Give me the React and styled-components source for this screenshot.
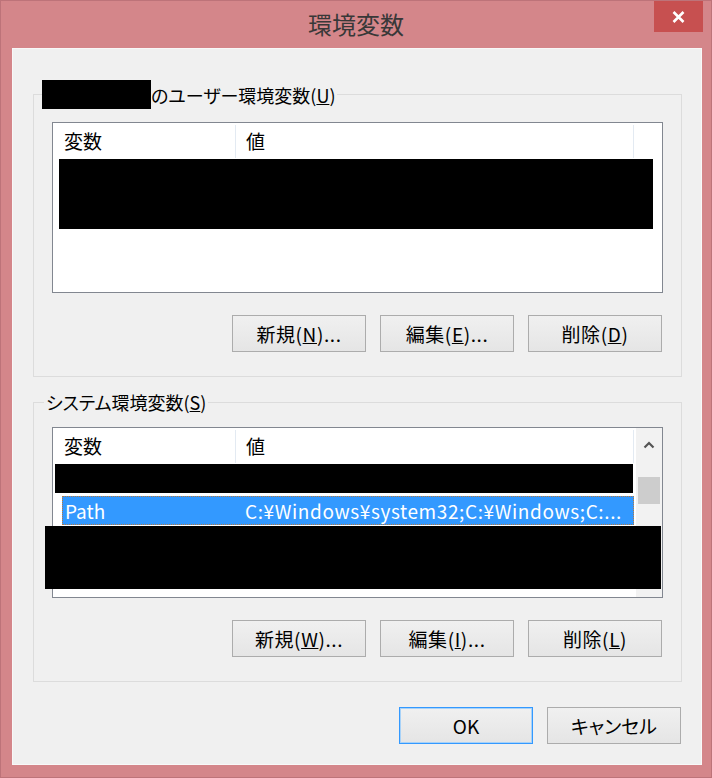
import React from 'react';
import styled, {createGlobalStyle} from 'styled-components';

const GlobalStyle = createGlobalStyle`
    html, body {
        margin: 0;
        padding: 0;
    }
    body {
        background: #d4868a;
        font-family: "Noto Sans CJK JP", "Noto Sans", sans-serif;
        font-feature-settings: "palt";
    }
`;

const Window = styled.div`
    width: 712px;
    height: 778px;
    box-sizing: border-box;
    background: #d4868a;
    border: 1px solid #bd7379;
    display: flex;
    flex-direction: column;
`;

const TitleBar = styled.div`
    height: 47px;
    display: grid;
    grid-template-columns: 1fr auto 1fr;
    align-items: start;
`;

const Title = styled.div`
    grid-column: 2;
    font-size: 24px;
    line-height: 46px;
    color: #383838;
`;

const CloseButton = styled.div`
    grid-column: 3;
    justify-self: end;
    width: 49px;
    height: 31px;
    margin-right: 8px;
    background: #c75050;
    display: flex;
    align-items: center;
    justify-content: center;
`;

const Client = styled.div`
    flex: 1;
    margin: 0 9px 12px 11px;
    background: #f0f0f0;
    border: 1px solid #f8f8f8;
    padding: 31px 19px 0 20px;
    display: flex;
    flex-direction: column;
`;

const Group = styled.fieldset`
    margin: 0;
    margin-top: ${p => p.$gap || 0}px;
    border: 1px solid #dcdcdc;
    padding: 13px 18px 24px 18px;
    min-width: 0;
`;

const Legend = styled.legend`
    margin-left: -8px;
    padding: 0 2px;
    font-size: 18px;
    line-height: 24px;
    color: #000;
    display: flex;
    align-items: center;
`;

const Redact = styled.span`
    display: inline-block;
    width: ${p => p.$w}px;
    height: ${p => p.$h}px;
    background: #000;
    margin-left: ${p => p.$ml || 0}px;
    margin-right: ${p => p.$mr || 0}px;
    margin-top: ${p => p.$mt || 0}px;
`;

const ListView = styled.div`
    position: relative;
    height: 171px;
    box-sizing: border-box;
    border: 1px solid #828790;
    background: #fff;
    display: flex;
`;

const ListMain = styled.div`
    flex: 1;
    min-width: 0;
    display: flex;
    flex-direction: column;
`;

const Header = styled.div`
    height: 35px;
    display: flex;
    flex-shrink: 0;
    font-size: 19px;
    color: #000;
`;

const HeaderCell = styled.div`
    width: ${p => p.$w}px;
    padding-left: ${p => p.$pl}px;
    box-sizing: border-box;
    margin-top: 2px;
    border-right: 1px solid #e3eaf2;
    display: flex;
    align-items: center;
    padding-bottom: 2px;
`;

const Row = styled.div`
    display: grid;
    grid-template-columns: 172px 1fr;
    height: 29px;
    box-sizing: border-box;
    margin: 3px 2px 0 9px;
    background: #3399ff;
    border: 1px dotted #b7793f;
    color: #fff;
    font-size: 19px;
    align-items: center;
    white-space: nowrap;
    overflow: hidden;
`;

const Cell = styled.span`
    padding-left: ${p => p.$pl}px;
    letter-spacing: ${p => p.$ls || 0}px;
    line-height: 26px;
`;

const Overlay = styled.div`
    position: absolute;
    left: -8px;
    top: 98px;
    width: 616px;
    height: 63px;
    background: #000;
`;

const Scrollbar = styled.div`
    width: 26px;
    background: #f2f2f2;
    display: flex;
    flex-direction: column;
    align-items: center;
`;

const ArrowUp = styled.div`
    height: 32px;
    display: flex;
    align-items: center;
    justify-content: center;
    margin-top: 1px;
`;

const Thumb = styled.div`
    width: 22px;
    height: 27px;
    margin-top: 16px;
    background: #cdcdcd;
`;

const ButtonRow = styled.div`
    display: flex;
    justify-content: flex-end;
    gap: 14px;
    margin-top: ${p => p.$mt || 22}px;
    padding-right: ${p => p.$pr || 1}px;
`;

const Button = styled.div`
    width: 134px;
    height: 37px;
    box-sizing: border-box;
    border: 1px solid ${p => p.$default ? '#3399ff' : '#acacac'};
    box-shadow: ${p => p.$default ? 'inset 0 0 0 1px #a8d2f8' : 'none'};
    background: linear-gradient(#f0f0f0, #e5e5e5);
    font-size: 19px;
    letter-spacing: ${p => p.$ls || 0}px;
    color: #000;
    display: flex;
    align-items: center;
    justify-content: center;
    padding-bottom: 1px;
`;

const ListHeader = () => (
    <Header>
        <HeaderCell $w={183} $pl={11}>変数</HeaderCell>
        <HeaderCell $w={398} $pl={10}>値</HeaderCell>
    </Header>
);

const Buttons = ({keys}) => (
    <ButtonRow>
        <Button $ls={0.6}>新規(<u>{keys[0]}</u>)...</Button>
        <Button $ls={0.6}>編集(<u>{keys[1]}</u>)...</Button>
        <Button $ls={0.6}>削除(<u>{keys[2]}</u>)</Button>
    </ButtonRow>
);

export default function App() {
    return (
        <>
            <GlobalStyle />
            <Window>
                <TitleBar>
                    <Title>環境変数</Title>
                    <CloseButton>
                        <svg width="13" height="12" viewBox="0 0 13 12">
                            <path d="M1.5 1 L11.5 11 M11.5 1 L1.5 11" stroke="#fff" strokeWidth="2.6" />
                        </svg>
                    </CloseButton>
                </TitleBar>
                <Client>
                    <Group>
                        <Legend>
                            <Redact $w={109} $h={29} $ml={-4} />
                            のユーザー環境変数(<u>U</u>)
                        </Legend>
                        <ListView>
                            <ListMain>
                                <ListHeader />
                                <Redact $w={594} $h={70} $ml={6} $mt={1} />
                            </ListMain>
                        </ListView>
                        <Buttons keys={['N', 'E', 'D']} />
                    </Group>
                    <Group $gap={13}>
                        <Legend>システム環境変数(<u>S</u>)</Legend>
                        <ListView>
                            <ListMain>
                                <ListHeader />
                                <Redact $w={578} $h={29} $ml={2} $mt={1} />
                                <Row>
                                    <Cell $pl={2}>Path</Cell>
                                    <Cell $pl={10} $ls={0.6}>C:¥Windows¥system32;C:¥Windows;C:...</Cell>
                                </Row>
                            </ListMain>
                            <Scrollbar>
                                <ArrowUp>
                                    <svg width="12" height="8" viewBox="0 0 12 8">
                                        <path d="M1.5 6.5 L6 2 L10.5 6.5" stroke="#555" strokeWidth="2.2" fill="none" />
                                    </svg>
                                </ArrowUp>
                                <Thumb />
                            </Scrollbar>
                            <Overlay />
                        </ListView>
                        <Buttons keys={['W', 'I', 'L']} />
                    </Group>
                    <ButtonRow $mt={25} $pr={0}>
                        <Button $default>OK</Button>
                        <Button>キャンセル</Button>
                    </ButtonRow>
                </Client>
            </Window>
        </>
    );
}
